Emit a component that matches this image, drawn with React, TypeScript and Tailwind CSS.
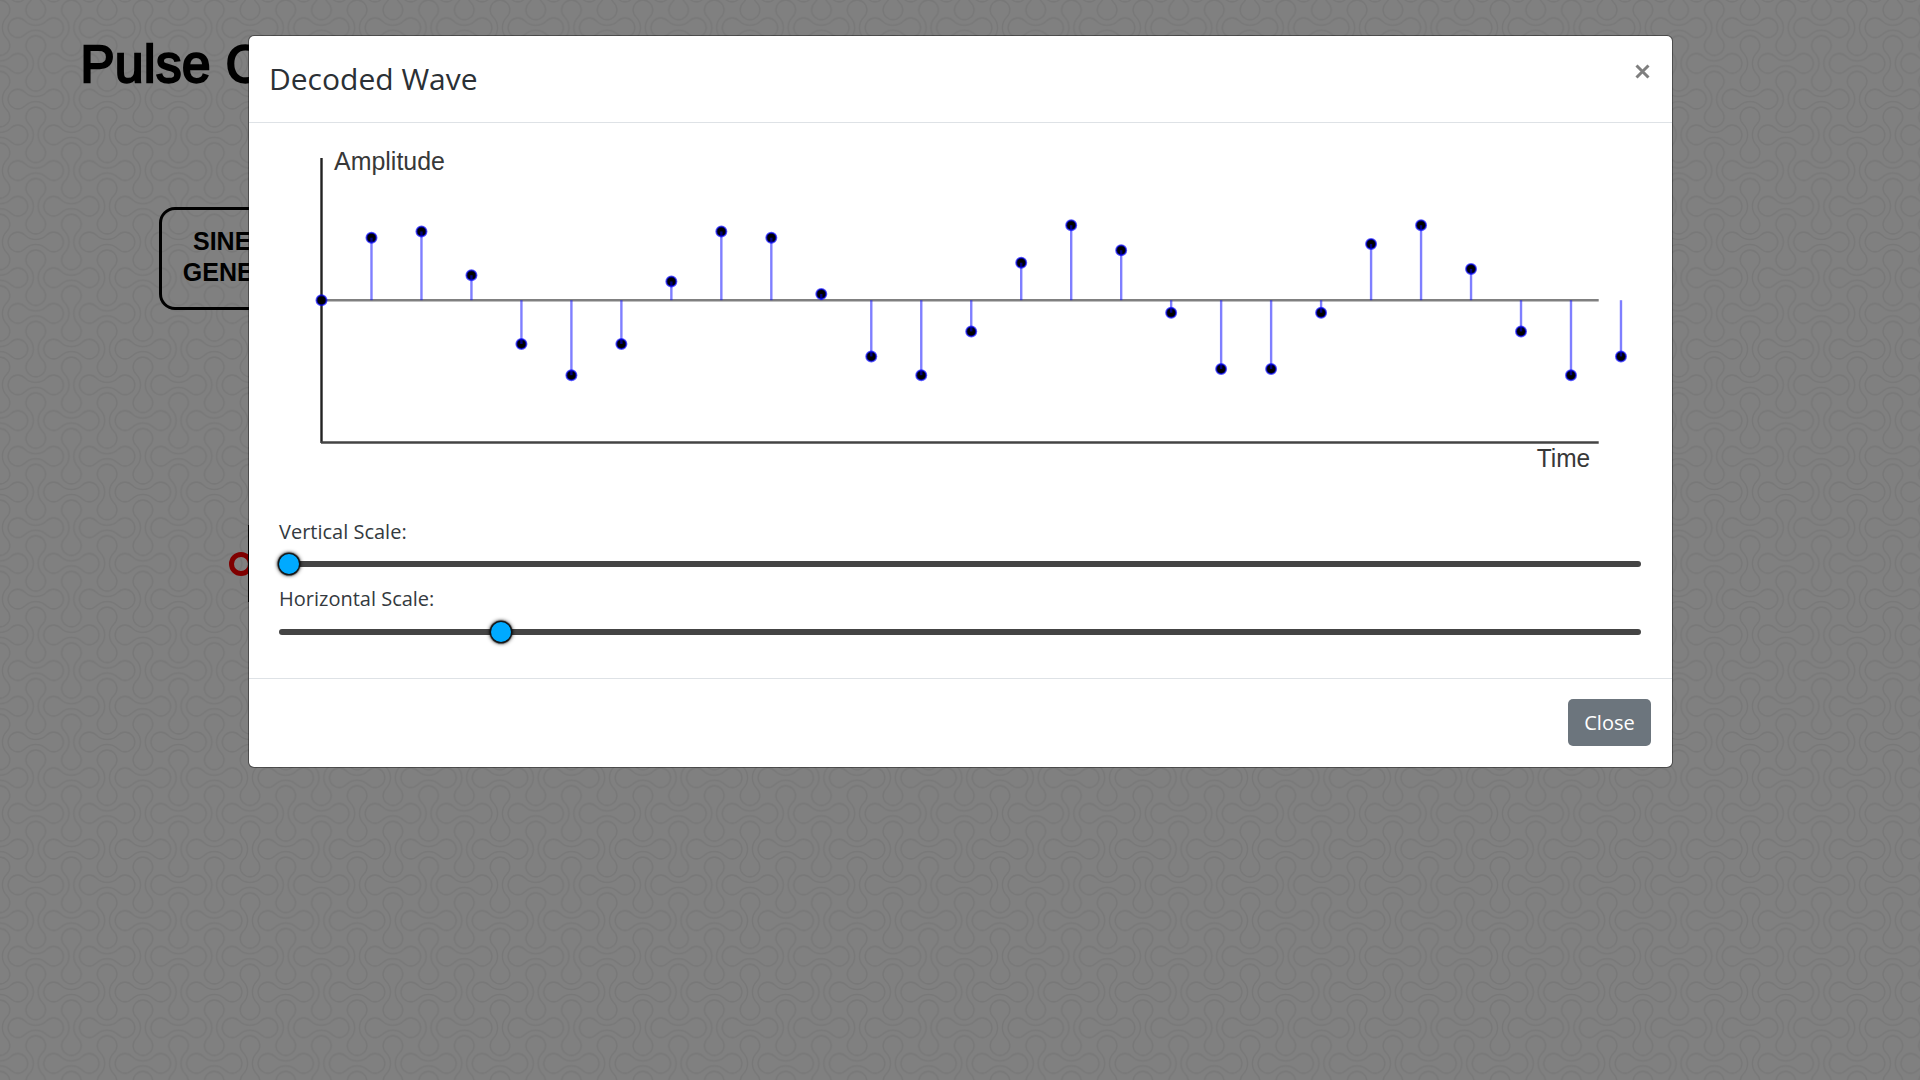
const P = 500 / 7;
const D = P / 4;
const R1 = 9.8;
const R2 = D * Math.SQRT2 - R1;
const K = R1 * Math.SQRT1_2;
const DUMBBELL = `M${-D + K} ${K}A${R1} ${R1} 0 1 1 ${-D + K} ${-K}A${R2} ${R2} 0 0 0 ${D - K} ${-K}A${R1} ${R1} 0 1 1 ${D - K} ${K}A${R2} ${R2} 0 0 0 ${-D + K} ${K}Z`;

const cells = [-1, 0, 1, 2, 3].flatMap((i) =>
  [-1, 0, 1, 2, 3].map((j) => ({
    x: (i * P) / 2,
    y: (j * P) / 2,
    turn: (i + j) % 2 === 0 ? 90 : 0,
  }))
);

function Wallpaper() {
  return (
    <svg className="absolute inset-0 h-full w-full">
      <defs>
        <pattern id="links" width={P} height={P} y={27.7} patternUnits="userSpaceOnUse">
          {cells.map((c) => (
            <path
              key={`${c.x},${c.y}`}
              d={DUMBBELL}
              transform={`translate(${c.x} ${c.y}) rotate(${c.turn})`}
              fill="none"
              stroke="#787878"
              strokeWidth="1.5"
            />
          ))}
        </pattern>
      </defs>
      <rect width="100%" height="100%" fill="url(#links)" />
    </svg>
  );
}

// Quantised sample levels, one per sampling instant.
const samples = [
  0, 10, 11, 4, -7, -12, -7, 3, 11, 10, 1, -9, -12, -5, 6, 12, 8, -2, -11, -11, -2, 9, 12, 5, -5, -12, -9,
];

function WaveChart() {
  return (
    <svg className="block h-[376px] w-full" viewBox="0 0 1423 376">
      <g fontFamily="'Liberation Sans', Arial, sans-serif" fontSize="25" fill="#383838">
        <text x="85" y="47.4" textLength="111" lengthAdjust="spacingAndGlyphs">Amplitude</text>
        <text x="1287.7" y="344.4" textLength="53.5" lengthAdjust="spacingAndGlyphs">Time</text>
      </g>
      <path d="M72.5 35V320" stroke="#222222" strokeWidth="2.4" />
      <path d="M72 319.5H1349.7" stroke="#444444" strokeWidth="2.4" />
      <path d="M72 177.2H1349.7" stroke="#808080" strokeWidth="2.4" />
      {samples.map((s, i) => {
        const x = 72.5 + i * 49.98;
        const y = 177.2 - s * 6.25;
        return (
          <g key={i}>
            <circle cx={x} cy={y} r="5" fill="#000000" stroke="#0000ff" strokeOpacity="0.65" strokeWidth="2" />
            <path d={`M${x} 177.2V${y}`} stroke="#0000ff" strokeOpacity="0.5" strokeWidth="2.4" />
          </g>
        );
      })}
    </svg>
  );
}

function Slider({ label, at }: { label: string; at: number }) {
  return (
    <div className="flex h-[47px] flex-col justify-between">
      <div className="h-6 text-[20px] leading-6 text-[#343a40]">{label}</div>
      <div className="relative h-1.5 rounded-full bg-[#444444]">
        <div
          className="absolute top-1/2 size-5 -translate-y-1/2 rounded-full bg-[#00aaff] shadow-[0_0_1px_1.5px_#111,0_0_4px_1px_#000]"
          style={{ left: at }}
        />
      </div>
    </div>
  );
}

export default function App() {
  return (
    <div className="relative h-[1080px] w-[1920px] overflow-hidden bg-[#808080] font-['Open_Sans',sans-serif]">
      <Wallpaper />
      <div className="relative">
        <h1 className="h-[98px] pt-[31px] pl-[80.5px] font-['Liberation_Sans',Arial,sans-serif] text-[51px] leading-[68px] font-normal tracking-[0.6px] whitespace-nowrap text-black [-webkit-text-stroke:2.3px_#000]">
          Pulse C
        </h1>
        <div className="mt-[109px] ml-[159px] flex h-[103px] w-[205px] flex-col items-center rounded-2xl border-3 border-black pt-4 font-['Liberation_Sans',Arial,sans-serif] text-[25px] leading-[31px] font-bold text-black">
          <span>SINE WAVE</span>
          <span>GENERATOR</span>
        </div>
        <div className="mt-[215px] ml-[229px] flex h-[77px] items-center">
          <div className="size-6 rounded-full border-5 border-[#800000]" />
          <div className="-ml-[5px] h-[77px] w-20 border-l-3 border-black" />
        </div>
      </div>

      <section className="absolute top-[35px] left-[248px] flex h-[733px] w-[1425px] flex-col rounded-md border border-black/40 bg-white bg-clip-padding text-[#212529]">
        <header className="flex h-[87px] shrink-0 justify-between border-b border-[#dee2e6] pt-5 pr-[21px] pl-5">
          <h2 className="text-[30px] leading-[46px] text-[#2b3035]">Decoded Wave</h2>
          <button className="-mt-px h-8 w-[17px] self-start text-[#7f7f7f]">
            <svg className="mx-auto block size-[15px]" viewBox="0 0 15 15">
              <path d="M1.5 1.5L13.5 13.5M13.5 1.5L1.5 13.5" stroke="currentColor" strokeWidth="3" />
            </svg>
          </button>
        </header>
        <div className="flex-1">
          <WaveChart />
          <div className="mt-[21px] mr-[31px] ml-[30px]">
            <Slider label="Vertical Scale:" at={-0.4} />
            <div className="h-5" />
            <div className="[&>div]:h-12">
              <Slider label="Horizontal Scale:" at={211.5} />
            </div>
          </div>
        </div>
        <footer className="flex h-[89px] shrink-0 items-start justify-end border-t border-[#dee2e6] pt-5 pr-[21px]">
          <button className="h-[47px] w-[83px] rounded-[5px] bg-[#6c757d] text-[20px] text-white">Close</button>
        </footer>
      </section>
    </div>
  );
}
